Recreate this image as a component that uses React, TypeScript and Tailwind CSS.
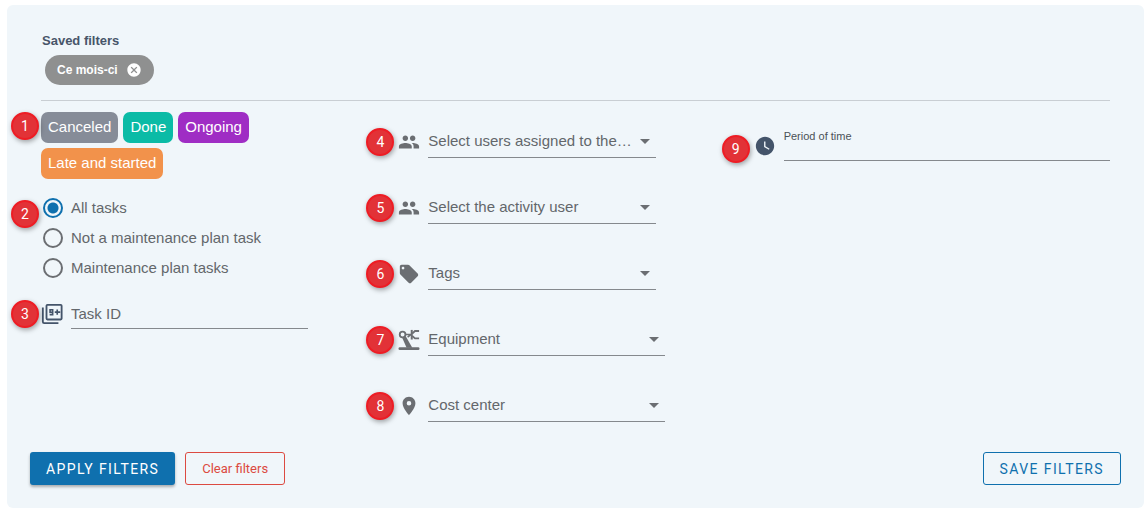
import { useState } from "react";
import type { ReactNode } from "react";
import { MdArrowDropDown, MdCancel, MdLocalOffer, MdPeople, MdPlace, MdWatchLater } from "react-icons/md";

const statuses = [
  { label: "Canceled", color: "bg-[#868c98]" },
  { label: "Done", color: "bg-[#0bbba6]" },
  { label: "Ongoing", color: "bg-[#9f2dc4]" },
  { label: "Late and started", color: "bg-[#f2924b]" },
];

const taskTypes = ["All tasks", "Not a maintenance plan task", "Maintenance plan tasks"];

function Marker({ value, position = "top-0 -left-[30px]" }: { value: number; position?: string }) {
  return (
    <span
      className={`${position} absolute flex size-7 items-center justify-center rounded-full border-2 border-[#ee1c24] bg-[#e23237] pb-px font-[Roboto,sans-serif] text-sm leading-none text-white shadow-[1px_2px_5px_rgba(0,0,0,0.35)]`}
    >
      {value}
    </span>
  );
}

function CounterIcon() {
  return (
    <svg width="22" height="22" viewBox="0 0 24 24" fill="none" stroke="currentColor" aria-hidden="true">
      <path d="M2 5v15.5a1.5 1.5 0 0 0 1.5 1.5H19" strokeWidth="2" />
      <rect x="6" y="2" width="16.5" height="16" rx="1" strokeWidth="2" />
      <path d="M12.7 10.2H9.9V7.4h2.8v5.4H9.4" strokeWidth="1.8" />
      <path d="M17.7 7.2v5.6M15 10h6" strokeWidth="1.8" />
    </svg>
  );
}

function RobotArmIcon() {
  return (
    <svg width="22" height="22" viewBox="0 0 24 24" fill="none" stroke="currentColor" aria-hidden="true">
      <circle cx="5" cy="6" r="3.1" strokeWidth="2" />
      <path d="M8 6h7M10.5 8.8l3.5-2.6" strokeWidth="1.8" />
      <path d="M4.6 9.6 8.6 8.2 15.6 20.5H9.4z" fill="currentColor" stroke="none" />
      <path d="M15 1v10.5" strokeWidth="2.2" />
      <path d="M15.5 5 18.5 2.2H23M15.5 7.5 18.5 10.2H23" strokeWidth="2" />
      <path d="M2 21.5h20" strokeWidth="3" strokeLinecap="round" />
    </svg>
  );
}

type SelectFieldProps = {
  id: string;
  label: string;
  marker: number;
  icon: ReactNode;
  inset?: boolean;
};

function SelectField({ id, label, marker, icon, inset = false }: SelectFieldProps) {
  return (
    <div className={inset ? "relative flex items-center gap-2 pr-[9px]" : "relative flex items-center gap-2"}>
      <Marker value={marker} position="top-0.5 -left-8" />
      <label htmlFor={id} aria-label={label} className="shrink-0 text-[#6b6e72]">
        {icon}
      </label>
      <div className="relative min-w-0 flex-1">
        <select
          id={id}
          className="block h-8 w-full appearance-none border-b border-[#85898d] bg-transparent pr-6 text-[15px] text-[#63676b] outline-none"
        >
          <option>{label}</option>
        </select>
        <MdArrowDropDown size={24} className="pointer-events-none absolute top-[3px] -right-px text-[#6b6e72]" />
      </div>
    </div>
  );
}

export default function App() {
  const [taskType, setTaskType] = useState(taskTypes[0]);

  return (
    <main className="mt-[5px] mr-0.5 ml-[7px] rounded-md bg-[#f0f6fa] px-[23px] pt-7 pb-[23px] font-['Liberation_Sans',Arial,sans-serif]">
      <section className="mx-[11px] border-b border-[#c9ced3] pb-[15px]">
        <h2 className="pl-px text-[13px] leading-4 font-bold text-[#475569]">Saved filters</h2>
        <div className="mt-[6px] ml-1 inline-flex h-[30px] items-center gap-2 rounded-full bg-[#8f9090] px-3 align-top text-xs font-bold text-white">
          Ce mois-ci
          <button type="button" aria-label="Remove Ce mois-ci">
            <MdCancel size={16} />
          </button>
        </div>
      </section>

      <div className="mx-[11px] mt-[11px] grid grid-cols-3">
        <div className="w-3/4">
          <div className="relative flex flex-wrap gap-[5px]">
            <Marker value={1} />
            {statuses.map((status) => (
              <button
                key={status.label}
                type="button"
                className={`${status.color} h-[31px] rounded-[7px] px-[7px] text-[15px] text-white`}
              >
                {status.label}
              </button>
            ))}
          </div>

          <fieldset className="relative mt-[14px]">
            <Marker value={2} position="top-[7px] -left-[30px]" />
            {taskTypes.map((type) => (
              <label key={type} className="flex h-[30px] items-center gap-2 pl-0.5 text-[15px] text-[#63676b]">
                <input
                  type="radio"
                  name="task-type"
                  checked={taskType === type}
                  onChange={() => setTaskType(type)}
                  className="size-5 shrink-0 appearance-none rounded-full border-2 border-[#6b6e72] checked:border-[#0f70ae] checked:bg-[radial-gradient(circle,#0f70ae_5px,transparent_6px)]"
                />
                {type}
              </label>
            ))}
          </fieldset>

          <div className="relative mt-4 flex items-center gap-2">
            <Marker value={3} position="top-px -left-[30px]" />
            <label htmlFor="task-id" aria-label="Task ID" className="shrink-0 text-[#44546a]">
              <CounterIcon />
            </label>
            <input
              id="task-id"
              type="text"
              placeholder="Task ID"
              className="h-[30px] min-w-0 flex-1 border-b border-[#85898d] bg-transparent text-[15px] text-[#63676b] outline-none placeholder:text-[#63676b]"
            />
          </div>
        </div>

        <div className="w-3/4 pt-[14px] pl-px">
          <div className="flex flex-col gap-[34px]">
            <SelectField id="assigned" marker={4} label="Select users assigned to the…" icon={<MdPeople size={22} />} inset />
            <SelectField id="activity" marker={5} label="Select the activity user" icon={<MdPeople size={22} />} inset />
            <SelectField id="tags" marker={6} label="Tags" icon={<MdLocalOffer size={22} />} inset />
            <SelectField id="equipment" marker={7} label="Equipment" icon={<RobotArmIcon />} />
            <SelectField id="cost-center" marker={8} label="Cost center" icon={<MdPlace size={22} />} />
          </div>
        </div>

        <div className="relative mt-[18px] flex h-[31px] items-center gap-2">
          <Marker value={9} position="top-[5px] -left-8" />
          <MdWatchLater size={22} className="shrink-0 text-[#44546a]" />
          <div className="flex h-full flex-1 flex-col border-b border-[#85898d]">
            <label htmlFor="period" className="text-[11px] leading-3 text-[#4b5157]">
              Period of time
            </label>
            <input id="period" type="text" className="h-4 w-full bg-transparent text-sm outline-none" />
          </div>
        </div>
      </div>

      <footer className="mt-[30px] flex items-center">
        <button
          type="button"
          className="h-[33px] rounded-[3px] bg-[#0f70ae] px-4 font-[Roboto,sans-serif] text-sm tracking-widest text-white uppercase shadow-[0_2px_3px_rgba(0,0,0,0.3)]"
        >
          Apply filters
        </button>
        <button
          type="button"
          className="ml-[10px] h-[33px] rounded-[3px] border border-[#dc4a41] px-4 font-[Roboto,sans-serif] text-[13px] text-[#dc4a41]"
        >
          Clear filters
        </button>
        <button
          type="button"
          className="ml-auto h-[33px] rounded-[3px] border border-[#0f70ae] px-4 font-[Roboto,sans-serif] text-sm tracking-widest text-[#0f70ae] uppercase"
        >
          Save filters
        </button>
      </footer>
    </main>
  );
}
